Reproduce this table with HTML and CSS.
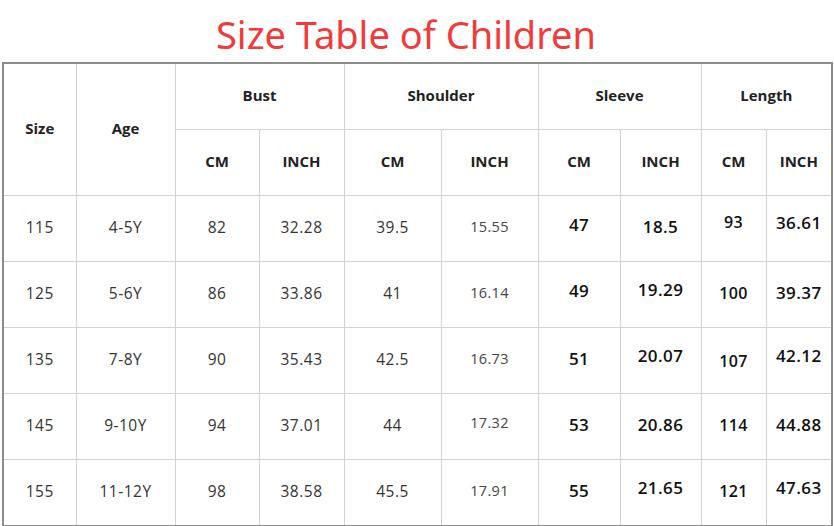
FILE: index.html
```html
<!DOCTYPE html>
<html lang="en">
<head>
<meta charset="utf-8">
<title>Size Table of Children</title>
<link rel="stylesheet" href="styles.css">
</head>
<body>
<h1 class="title">Size Table of Children</h1>
<table class="size-table">
  <colgroup>
    <col class="c-size"><col class="c-age">
    <col class="c-bust"><col class="c-bust2">
    <col class="c-sh"><col class="c-sh2">
    <col class="c-sl"><col class="c-sl2">
    <col class="c-len"><col class="c-len2">
  </colgroup>
  <thead>
    <tr>
      <th rowspan="2">Size</th>
      <th rowspan="2">Age</th>
      <th colspan="2">Bust</th>
      <th colspan="2">Shoulder</th>
      <th colspan="2">Sleeve</th>
      <th colspan="2">Length</th>
    </tr>
    <tr>
      <th>CM</th><th>INCH</th>
      <th>CM</th><th>INCH</th>
      <th>CM</th><th>INCH</th>
      <th>CM</th><th>INCH</th>
    </tr>
  </thead>
  <tbody>
    <tr>
      <td>115</td><td>4-5Y</td><td>82</td><td>32.28</td><td>39.5</td><td class="small">15.55</td>
      <td class="bold"><span class="v up2">47</span></td><td class="bold">18.5</td><td class="bold light"><span class="v up5">93</span></td><td class="bold"><span class="v up4">36.61</span></td>
    </tr>
    <tr>
      <td>125</td><td>5-6Y</td><td>86</td><td>33.86</td><td>41</td><td class="small">16.14</td>
      <td class="bold"><span class="v up2">49</span></td><td class="bold"><span class="v up3">19.29</span></td><td class="bold light">100</td><td class="bold">39.37</td>
    </tr>
    <tr>
      <td>135</td><td>7-8Y</td><td>90</td><td>35.43</td><td>42.5</td><td class="small">16.73</td>
      <td class="bold">51</td><td class="bold"><span class="v up3">20.07</span></td><td class="bold light"><span class="v down2">107</span></td><td class="bold"><span class="v up3">42.12</span></td>
    </tr>
    <tr>
      <td>145</td><td>9-10Y</td><td>94</td><td>37.01</td><td>44</td><td class="small"><span class="v up2">17.32</span></td>
      <td class="bold">53</td><td class="bold">20.86</td><td class="bold light">114</td><td class="bold">44.88</td>
    </tr>
    <tr>
      <td>155</td><td>11-12Y</td><td>98</td><td>38.58</td><td>45.5</td><td class="small">17.91</td>
      <td class="bold">55</td><td class="bold"><span class="v up3">21.65</span></td><td class="bold light">121</td><td class="bold"><span class="v up3">47.63</span></td>
    </tr>
  </tbody>
</table>
</body>
</html>
```
FILE: styles.css
```css
html, body {
  margin: 0;
  padding: 0;
  background: #ffffff;
}

body {
  width: 834px;
  height: 526px;
  overflow: hidden;
  font-family: "Open Sans", "Noto Sans", "Liberation Sans", sans-serif;
}

.title {
  margin: 0;
  height: 62px;
  box-sizing: border-box;
  padding: 8px 22px 0 0;
  text-align: center;
  font-family: "Noto Sans", "Open Sans", sans-serif;
  font-weight: 400;
  font-size: 38px;
  line-height: 52px;
  color: #f23a3a;
}

.size-table {
  margin-left: 2px;
  border-collapse: collapse;
  table-layout: fixed;
  width: 829px;
  border: 2px solid #8c8c8c;
}

.c-size { width: 73px; }
.c-age { width: 99px; }
.c-bust { width: 84px; }
.c-bust2 { width: 85px; }
.c-sh { width: 97px; }
.c-sh2 { width: 97px; }
.c-sl { width: 82px; }
.c-sl2 { width: 81px; }
.c-len { width: 65px; }
.c-len2 { width: 66px; }

.size-table th,
.size-table td {
  border: 1px solid #d2d2d2;
  height: 62px;
  padding: 0 0 3px 0;
  text-align: center;
  vertical-align: middle;
  line-height: 20px;
}

.size-table th {
  font-size: 15px;
  font-weight: 700;
  color: #222222;
}

.size-table td {
  font-size: 15.5px;
  font-weight: 400;
  color: #333333;
  letter-spacing: 0.5px;
}

.size-table td.small {
  font-size: 14.5px;
  color: #444444;
  letter-spacing: 0.3px;
}

.size-table td.bold {
  font-size: 17px;
  font-weight: 600;
  color: #111111;
  letter-spacing: 0.4px;
}

.size-table td.light {
  font-size: 16px;
}

.v { display: inline-block; }
.up2 { margin-bottom: 4px; }
.up3 { margin-bottom: 6px; }
.up4 { margin-bottom: 8px; }
.up5 { margin-bottom: 10px; }
.down2 { margin-top: 4px; }
```
